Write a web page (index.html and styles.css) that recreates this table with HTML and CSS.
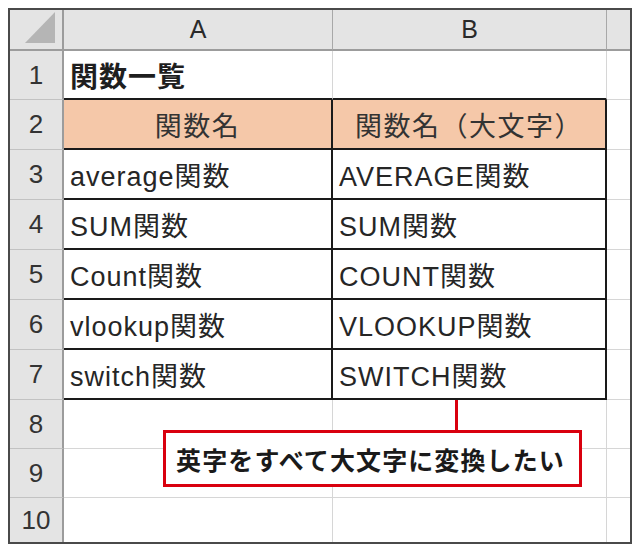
FILE: index.html
```html
<!DOCTYPE html>
<html lang="ja">
<head>
<meta charset="utf-8">
<title>関数一覧</title>
<link rel="stylesheet" href="styles.css">
</head>
<body>
<div class="sheet">
  <div class="grid">
    <div class="hd corner"><span class="tri"></span></div>
    <div class="hd col">A</div>
    <div class="hd col">B</div>
    <div class="hd col last"></div>

    <div class="rh">1</div>
    <div class="c title tb">関数一覧</div>
    <div class="c tb"></div>
    <div class="c last"></div>

    <div class="rh">2</div>
    <div class="c t th">関数名</div>
    <div class="c t th">関数名（大文字）</div>
    <div class="c last"></div>

    <div class="rh">3</div>
    <div class="c t">average関数</div>
    <div class="c t">AVERAGE関数</div>
    <div class="c last"></div>

    <div class="rh">4</div>
    <div class="c t">SUM関数</div>
    <div class="c t">SUM関数</div>
    <div class="c last"></div>

    <div class="rh">5</div>
    <div class="c t">Count関数</div>
    <div class="c t">COUNT関数</div>
    <div class="c last"></div>

    <div class="rh">6</div>
    <div class="c t">vlookup関数</div>
    <div class="c t">VLOOKUP関数</div>
    <div class="c last"></div>

    <div class="rh">7</div>
    <div class="c t">switch関数</div>
    <div class="c t">SWITCH関数</div>
    <div class="c last"></div>

    <div class="rh">8</div>
    <div class="c"></div>
    <div class="c"></div>
    <div class="c last"></div>

    <div class="rh">9</div>
    <div class="c"></div>
    <div class="c"></div>
    <div class="c last"></div>

    <div class="rh end">10</div>
    <div class="c end"></div>
    <div class="c end"></div>
    <div class="c last end"></div>
  </div>
  <div class="connector"></div>
  <div class="callout">英字をすべて大文字に変換したい</div>
</div>
</body>
</html>
```

FILE: styles.css
```css
html, body {
  margin: 0;
  padding: 0;
  background: #ffffff;
}

.sheet {
  position: relative;
  margin: 8px 0 0 8px;
  width: 620px;
  border: 2px solid #4a4a4a;
  font-family: "Liberation Sans", "Noto Sans CJK JP", sans-serif;
}

.grid {
  display: grid;
  grid-template-columns: 54px 269px 274px 23px;
  grid-template-rows: 41px 49px 50px 50px 50px 50px 50px 50px 49px 49px 44px;
}

.grid > div {
  box-sizing: border-box;
}

.hd {
  background: #e4e4e4;
  border-bottom: 2px solid #9c9c9c;
  border-right: 1px solid #a8a8a8;
  display: flex;
  align-items: center;
  justify-content: center;
  font-size: 25px;
  color: #2a2a2a;
}

.hd.corner {
  border-right: 2px solid #9c9c9c;
  justify-content: flex-end;
  align-items: flex-end;
  padding: 0 7px 6px 0;
}

.tri {
  display: block;
  width: 30px;
  height: 31px;
  background: #b5b5b5;
  clip-path: polygon(100% 0, 100% 100%, 0 100%);
}

.hd.last {
  border-right: none;
}

.rh {
  background: #e4e4e4;
  border-right: 2px solid #9c9c9c;
  border-bottom: 1px solid #c2c2c2;
  display: flex;
  align-items: center;
  justify-content: center;
  font-size: 26px;
  color: #333333;
}

.c {
  background: #ffffff;
  border-right: 1px solid #d6d6d6;
  border-bottom: 1px solid #d6d6d6;
  display: flex;
  align-items: center;
  padding-left: 6px;
  font-size: 27px;
  color: #262626;
  white-space: nowrap;
  letter-spacing: 1px;
}

.c.last {
  border-right: none;
}

.end {
  border-bottom: none;
}

.c.title {
  font-weight: bold;
  font-family: "Noto Sans CJK JP", sans-serif;
  font-size: 28px;
  letter-spacing: 1px;
  color: #1e1e1e;
}

.c.tb {
  border-bottom: 2px solid #1a1a1a;
}

.c.t {
  border-right: 2px solid #1a1a1a;
  border-bottom: 2px solid #1a1a1a;
}

.c.th {
  background: #f5c8a9;
  justify-content: center;
  padding-left: 0;
  color: #333333;
  letter-spacing: 1.5px;
}

.connector {
  position: absolute;
  left: 445px;
  top: 390px;
  width: 3px;
  height: 31px;
  background: #d9000e;
}

.callout {
  position: absolute;
  left: 153px;
  top: 420px;
  width: 419px;
  height: 57px;
  box-sizing: border-box;
  border: 3px solid #d9000e;
  background: #ffffff;
  display: flex;
  align-items: center;
  justify-content: center;
  font-family: "Noto Sans CJK JP", sans-serif;
  font-weight: bold;
  font-size: 25px;
  letter-spacing: 1.1px;
  color: #1a1a1a;
  padding-right: 4px;
}
```
